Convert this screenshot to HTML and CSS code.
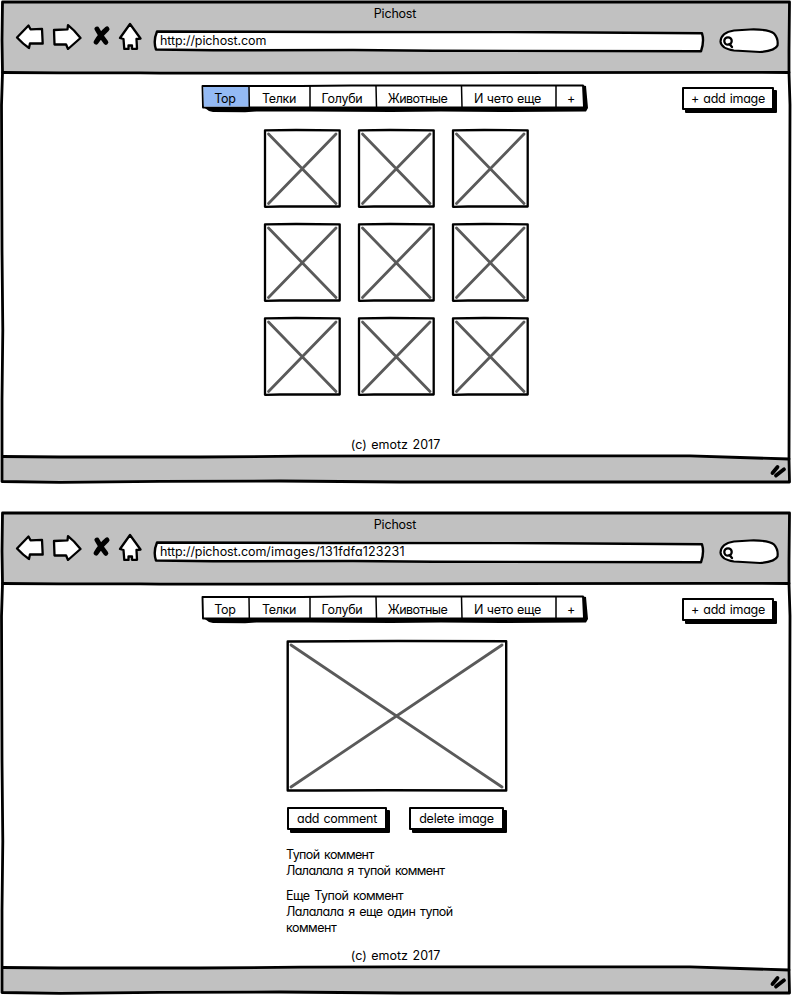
FILE: index.html
```
<!DOCTYPE html>
<html lang="ru">
<head>
<meta charset="utf-8">
<title>Pichost</title>
<link rel="stylesheet" href="styles.css">
</head>
<body>
<svg class="defs" width="0" height="0" aria-hidden="true">
  <symbol id="frame" viewBox="0 0 792 484">
    <path fill="#c1c1c1" d="M3 2H789V73H3ZM3 457L300 457 400 456 720 456.500 789 459V482H3Z"/>
    <g fill="none" stroke="#000" stroke-width="2.800" stroke-linecap="round" stroke-linejoin="round">
      <path d="M2.500 2H789.500L789 50 789 73 790 105 789 459 789.500 482H520L400 482 280 481 160 481.300 60 482.300 2 481.500V400L2.800 330 2 250 1.500 105 2.500 73 2 40Z"/>
      <path d="M2.500 72.500L60 72.800H140L160 73.200 420 72.800 720 72.300 789 72.500"/>
      <path d="M2.500 456.500L60 457H200L300 456.200 400 455.800 690 455.800 740 457.500 789 459"/>
    </g>
    <g stroke="#000" stroke-width="3.800" stroke-linecap="round"><path d="M772.500 473L777.500 467M776 475.500L784 469.300"/></g>
  </symbol>
  <symbol id="nav-icons" viewBox="0 0 128 30">
    <g fill="#fff" stroke="#000" stroke-width="2.300" stroke-linejoin="round">
      <path d="M2 17.500L13.500 5.500 15.500 9.300 27 8.800 27.700 23.500 15 23.300 14 28Q8 24 2 17.500Z"/>
      <path d="M39 10L52.500 9.300 53 5.200 59 10.500 65.500 18 53 29 51 24.300 39.500 24.500Z"/>
      <path d="M115 4L125.500 18.500 121.500 19 122 28.800H117V25.500H113.500V29H109.300L108.500 19 105 18Z"/>
    </g>
    <g fill="none" stroke="#000" stroke-width="5" stroke-linecap="round"><path d="M82 9Q85 15 90.800 22.300M92 9Q86 14 81.200 22"/></g>
  </symbol>
  <symbol id="search" viewBox="0 0 62 26">
    <path fill="#fff" stroke="#000" stroke-width="2.200" d="M31 1.500Q50 1 55 5.500Q59.500 10.500 58.500 17.500Q56.500 22.500 41 24L15 22.500Q2 20.500 1.500 13.500Q2 4.500 15 2.500Z"/>
    <g fill="none" stroke="#000" stroke-width="2.300" stroke-linecap="round"><circle cx="9" cy="13" r="3.700"/><path d="M10.500 16L13 19"/></g>
  </symbol>
  <symbol id="url-box" viewBox="0 0 554 24">
    <path fill="#fff" stroke="#000" stroke-width="2.400" stroke-linejoin="round" d="M4 2.500L180 3 400 3.200 549 4.300Q551.500 12 548 22.300L280 21.700 200 21 60 21.300 3 20.500Q0 12 4 2.500Z"/>
  </symbol>
  <symbol id="tab-box" viewBox="0 0 388 30">
    <path d="M1 23L8 28 12 29 44 29.200 55 28.500 108 28.500 190 29 240 28.500 300 29 385 28.500 387 25 385 3 380 2 382 24Z"/>
    <path fill="#fff" stroke="#000" stroke-width="1.900" stroke-linejoin="round" d="M1.500 3L100 3 150 2.500H382L383 24.500H2Z"/>
  </symbol>
  <symbol id="tab-selected" viewBox="0 0 388 30"><path fill="#94baf4" d="M2.500 4H48V23.500H2.900Z"/></symbol>
  <symbol id="tab-lines" viewBox="0 0 388 30">
    <path fill="none" stroke="#000" stroke-width="1.500" d="M48 3L48.300 24M109 3V24M175 3L175.500 24M260.500 3L261 24M355 3V25"/>
  </symbol>
  <symbol id="thumb" viewBox="0 0 78 80">
    <path fill="#fff" stroke="#000" stroke-width="2.300" stroke-linejoin="round" d="M2 2.300L33 2 76.700 2.300 76.700 78.500H17L2 78.800Z"/>
    <path stroke="#5a5a5a" stroke-width="2.800" stroke-linecap="round" d="M5.500 6L73 75.500M73 6L5.500 75.500"/>
  </symbol>
</svg>

<section class="window">
  <svg class="frame"><use href="#frame"/></svg>
  <header class="chrome">
    <div class="title">Pichost</div>
    <div class="toolbar">
      <svg class="nav-icons"><use href="#nav-icons"/></svg>
      <div class="url"><svg class="backing"><use href="#url-box"/></svg><span>http://pichost.com</span></div>
      <svg class="search"><use href="#search"/></svg>
    </div>
  </header>
  <main class="page">
    <div class="menu">
      <nav class="tabs">
        <svg class="backing"><use href="#tab-box"/><use href="#tab-selected"/><use href="#tab-lines"/></svg>
        <span>Top</span><span>Телки</span><span>Голуби</span><span class="tight">Животные</span><span>И чето еще</span><span>+</span>
      </nav>
      <button class="button add-image">+ add image</button>
    </div>
    <div class="gallery">
      <svg><use href="#thumb"/></svg><svg><use href="#thumb"/></svg><svg><use href="#thumb"/></svg>
      <svg><use href="#thumb"/></svg><svg><use href="#thumb"/></svg><svg><use href="#thumb"/></svg>
      <svg><use href="#thumb"/></svg><svg><use href="#thumb"/></svg><svg><use href="#thumb"/></svg>
    </div>
    <p class="copyright">(c) emotz 2017</p>
  </main>
</section>

<section class="window">
  <svg class="frame"><use href="#frame"/></svg>
  <header class="chrome">
    <div class="title">Pichost</div>
    <div class="toolbar">
      <svg class="nav-icons"><use href="#nav-icons"/></svg>
      <div class="url"><svg class="backing"><use href="#url-box"/></svg><span>http://pichost.com<span class="path">/images/131fdfa123231</span></span></div>
      <svg class="search"><use href="#search"/></svg>
    </div>
  </header>
  <main class="page">
    <div class="menu">
      <nav class="tabs">
        <svg class="backing"><use href="#tab-box"/><use href="#tab-lines"/></svg>
        <span>Top</span><span>Телки</span><span>Голуби</span><span class="tight">Животные</span><span>И чето еще</span><span>+</span>
      </nav>
      <button class="button add-image">+ add image</button>
    </div>
    <article class="details">
      <svg class="picture" viewBox="0 0 222 154">
        <path fill="#fff" stroke="#000" stroke-width="2.400" stroke-linejoin="round" d="M1.700 2.500L112 2 220.200 2.300V151.500L100 151.200 30 151.500H1.700Z"/>
        <path stroke="#5a5a5a" stroke-width="2.800" stroke-linecap="round" d="M5 6L216 148M216 6L5 148"/>
      </svg>
      <div class="actions">
        <button class="button add-comment">add comment</button>
        <button class="button delete-image">delete image</button>
      </div>
      <p class="comment">Тупой коммент<br>Лалалала я тупой коммент</p>
      <p class="comment">Еще Тупой коммент<br>Лалалала я еще один тупой<br>коммент</p>
    </article>
    <p class="copyright">(c) emotz 2017</p>
  </main>
</section>
</body>
</html>
```
FILE: styles.css
```
* { box-sizing: border-box; }

body {
  margin: 0;
  width: 792px;
  background: #fff;
  color: #000;
  font: 12.5px/16px Inter, "Liberation Sans", sans-serif;
  font-feature-settings: "cv11";
}

p { margin: 0; }
svg { display: block; }
.defs { position: absolute; }

.window {
  position: relative;
  height: 484px;
  margin-bottom: 27px;
  display: flex;
  flex-direction: column;
}
.window:last-child { margin-bottom: 0; }

.frame, .backing {
  position: absolute;
  inset: 0;
  width: 100%;
  height: 100%;
}

.chrome, .page { position: relative; }
.chrome { height: 74px; padding-top: 6px; }
.title {
  height: 14px;
  padding-right: 2px;
  line-height: 15px;
  letter-spacing: -0.2px;
  text-align: center;
}

.toolbar { display: flex; padding-left: 15px; }
.nav-icons { width: 128px; height: 30px; }
.url {
  position: relative;
  width: 554px;
  height: 24px;
  margin: 9px 0 0 10px;
  padding: 4px 0 0 7px;
}
.url span { position: relative; letter-spacing: -0.1px; }
.url .path { letter-spacing: 0.17px; }
.search { width: 62px; height: 26px; margin: 8px 0 0 12px; }

.page { flex: 1; display: flex; flex-direction: column; }
.menu {
  display: flex;
  justify-content: space-between;
  padding: 9px 18px 0 201px;
}
.tabs {
  position: relative;
  display: grid;
  grid-template-columns: 48px 60px 66px 85px 95px 32px;
  width: 388px;
  height: 30px;
  padding: 8px 0 0 0;
  letter-spacing: -0.3px;
  word-spacing: 0.5px;
  text-align: center;
}
.tabs span { position: relative; white-space: nowrap; }
.tabs .tight { letter-spacing: -0.55px; }

.button {
  height: 23px;
  padding: 1px 0 0;
  border: 2px solid #000;
  border-radius: 1px;
  background: #fff;
  box-shadow: 3px 3px #000;
  color: inherit;
  font: inherit;
  font-feature-settings: inherit;
  letter-spacing: -0.25px;
  word-spacing: 1px;
  line-height: 18px;
  white-space: nowrap;
}
.add-image { width: 92px; margin-top: 4px; padding-top: 0; }

.gallery {
  display: grid;
  grid-template-columns: repeat(3, 78px);
  gap: 14px 16px;
  margin: 15px 0 0 263px;
}
.gallery svg { width: 78px; height: 80px; }

.details { margin: 15px 0 0 286px; width: 222px; }
.picture { width: 222px; height: 154px; }
.actions { display: flex; justify-content: space-between; padding: 14px 4px 0 1px; }
.add-comment { width: 100px; }
.delete-image { width: 95px; }
.comment {
  margin-top: 9px;
  letter-spacing: -0.6px;
  word-spacing: 1.6px;
  white-space: nowrap;
}
.comment + .comment { letter-spacing: -0.5px; }
.actions + .comment { margin-top: 17px; }

.copyright {
  margin: auto 0 31px;
  padding-right: 1px;
  word-spacing: 1px;
  text-align: center;
}
```
